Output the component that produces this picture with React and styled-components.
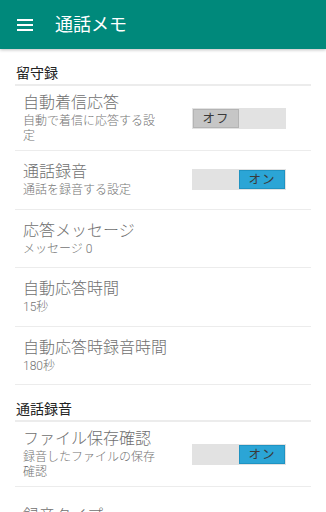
import React from "react";
import styled, { createGlobalStyle } from "styled-components";

const Global = createGlobalStyle`
  html, body { margin: 0; padding: 0; background: #fff; }
  body { font-family: Roboto, "Noto Sans CJK JP", sans-serif; width: 326px; height: 512px; overflow: hidden; }
`;

const Page = styled.div`
  width: 326px;
  height: 512px;
  overflow: hidden;
  background: #fff;
`;

const AppBar = styled.div`
  height: 49px;
  background: #00897b;
  display: flex;
  align-items: center;
  padding-left: 17px;
  box-shadow: 0 1px 3px rgba(0, 0, 0, 0.25);
  position: relative;
  z-index: 1;
`;

const Menu = styled.div`
  width: 16px;
  display: flex;
  flex-direction: column;
  gap: 3px;
  span { display: block; height: 2px; background: #fff; }
`;

const Title = styled.div`
  margin-left: 22px;
  color: #fff;
  font-size: 18px;
  line-height: 24px;
`;

const List = styled.div`
  padding: 0 15px;
`;

const Category = styled.div`
  padding: 16px 0 2px 1px;
  font-size: 14px;
  line-height: 17px;
  color: #222;
  border-bottom: 2px solid #ececec;
`;

const Row = styled.div`
  display: flex;
  align-items: center;
  min-height: 57.5px;
  padding: 0 25px 0 8px;
  border-bottom: 1px solid #ececec;
`;

const Texts = styled.div`
  flex: 1;
  margin: 6px 0;
  min-width: 0;
`;

const ItemTitle = styled.div`
  font-size: 16px;
  line-height: 21px;
  font-weight: 300;
  color: #6f6f6f;
  white-space: nowrap;
`;

const Summary = styled.div`
  margin-top: 1px;
  font-size: 12px;
  line-height: 15px;
  font-weight: 300;
  color: #747474;
`;

const SummaryLine = styled.div`
  white-space: nowrap;
`;

const Track = styled.div`
  width: 94px;
  height: 21px;
  background: #e2e2e2;
  display: flex;
  justify-content: ${(p) => (p.$on ? "flex-end" : "flex-start")};
  align-items: center;
  flex: none;
`;

const Thumb = styled.div`
  width: 46px;
  height: 19px;
  box-sizing: border-box;
  margin: 0 1px;
  background: ${(p) => (p.$on ? "#2ba5d6" : "#c6c6c6")};
  border: 1px solid ${(p) => (p.$on ? "#1f93c2" : "#b4b4b4")};
  color: #3a3a3a;
  font-size: 12.5px;
  line-height: 17px;
  text-align: center;
  letter-spacing: 1px;
`;

function Toggle({ on }) {
  return (
    <Track $on={on}>
      <Thumb $on={on}>{on ? "オン" : "オフ"}</Thumb>
    </Track>
  );
}

function Item({ title, summary = [], toggle }) {
  const hasToggle = toggle !== undefined;
  return (
    <Row>
      <Texts>
        <ItemTitle>{title}</ItemTitle>
        {summary.length > 0 && (
          <Summary>
            {summary.map((line) => (
              <SummaryLine key={line}>{line}</SummaryLine>
            ))}
          </Summary>
        )}
      </Texts>
      {hasToggle && <Toggle on={toggle} />}
    </Row>
  );
}

export default function App() {
  return (
    <Page>
      <Global />
      <AppBar>
        <Menu>
          <span />
          <span />
          <span />
        </Menu>
        <Title>通話メモ</Title>
      </AppBar>
      <List>
        <Category>留守録</Category>
        <Item title="自動着信応答" summary={["自動で着信に応答する設", "定"]} toggle={false} />
        <Item title="通話録音" summary={["通話を録音する設定"]} toggle={true} />
        <Item title="応答メッセージ" summary={["メッセージ 0"]} />
        <Item title="自動応答時間" summary={["15秒"]} />
        <Item title="自動応答時録音時間" summary={["180秒"]} />
        <Category>通話録音</Category>
        <Item title="ファイル保存確認" summary={["録音したファイルの保存", "確認"]} toggle={true} />
        <Item title="録音タイプ" />
      </List>
    </Page>
  );
}
